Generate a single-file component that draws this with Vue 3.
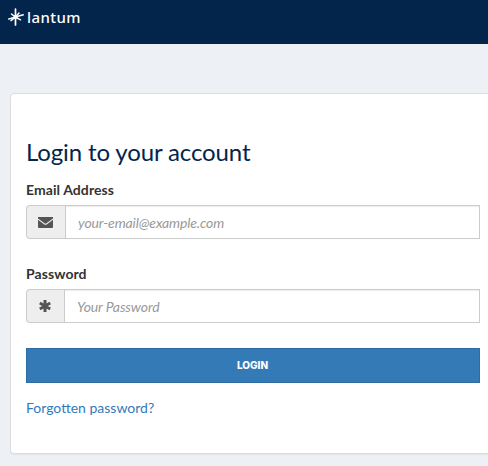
<template>
  <div class="page">
    <header class="navbar">
      <a class="brand" href="#" aria-label="lantum">
        <svg class="brand-mark" viewBox="0 0 16 18" fill="#fff" stroke="#fff" stroke-linecap="round">
          <path d="M7.500 1v16" stroke-width="1.700"/>
          <path d="M.8 11l6.700-2 7.700-2.200" stroke-width="1.500"/>
          <path d="M3.500 6l4 3 5 2.800" stroke-width="1.500"/>
          <path d="M11 5L7.500 9 3 12.600" stroke-width="1.500"/>
          <circle cx="7.500" cy="9" r="2" stroke="none"/>
        </svg>
        <span class="brand-name">lantum</span>
      </a>
    </header>

    <main class="panel">
      <h1 class="title">Login to your account</h1>
      <form @submit.prevent>
        <div v-for="field in fields" :key="field.id" class="form-group">
          <label :for="field.id">{{ field.label }}</label>
          <div class="input-group">
            <span class="addon" :class="field.id">
              <svg v-if="field.id === 'email'" class="icon-mail" viewBox="0 0 15 11" fill="currentColor">
                <path d="M0 0h15v1.500L8.500 6.300Q7.500 7 6.500 6.300L0 1.500z"/>
                <path d="M0 2.800l6 4.400q1.500 1.100 3 0l6-4.400V10q0 1-1 1H1q-1 0-1-1z"/>
              </svg>
              <svg v-else class="icon-asterisk" viewBox="0 0 12 12" fill="none" stroke="currentColor" stroke-width="3">
                <path d="M6 0v12M.8 3l10.400 6M11.200 3L.8 9"/>
              </svg>
            </span>
            <input :id="field.id" v-model="form[field.id]" :type="field.type" :placeholder="field.placeholder" />
          </div>
        </div>
        <button type="submit" class="btn-login">LOGIN</button>
      </form>
      <a class="forgot" href="#">Forgotten password?</a>
    </main>
  </div>
</template>

<script setup>
import { reactive } from 'vue'

const form = reactive({ email: '', password: '' })

const fields = [
  { id: 'email', label: 'Email Address', type: 'email', placeholder: 'your-email@example.com' },
  { id: 'password', label: 'Password', type: 'password', placeholder: 'Your Password' }
]
</script>

<style>
body {
  background: #edf1f6;
  overflow: hidden;
}
</style>

<style scoped>
* { box-sizing: border-box; }
.page {
  min-height: 466px;
  font-family: Lato, sans-serif;
  font-size: 14px;
  line-height: 20px;
  color: #333;
}
.navbar {
  height: 44px;
  padding: 8px 8px 0;
  background: #03254c;
}
.brand {
  display: flex;
  width: 90px;
  color: #fff;
  text-decoration: none;
}
.brand-mark {
  width: 16px;
  height: 18px;
}
.brand-name {
  margin-left: 3px;
  font-family: "Noto Sans", sans-serif;
  font-size: 15px;
  font-weight: 500;
  line-height: 19px;
  letter-spacing: 0.4px;
}

/* The panel runs past the right edge of the window */
.panel {
  width: 486px;
  height: 361px;
  margin: 49px 0 0 10px;
  padding: 42px 15px 0;
  background: #fff;
  border: 1px solid #ddd;
  border-radius: 4px;
  box-shadow: 0 1px 1px rgba(0, 0, 0, 0.05);
}
.title {
  margin: 0 0 12px;
  font-size: 24px;
  font-weight: 400;
  line-height: 32px;
  letter-spacing: -0.13px;
  color: #03254c;
}
.form-group {
  height: 59px;
  margin-bottom: 25px;
}
label {
  display: block;
  margin-bottom: 5px;
  font-weight: 700;
  letter-spacing: 0.08px;
}
.input-group {
  display: flex;
  height: 34px;
}
.addon {
  display: flex;
  align-items: center;
  width: 39px;
  padding-left: 11px;
  color: #555;
  background: #eee;
  border: 1px solid #ccc;
  border-right: 0;
  border-radius: 4px 0 0 4px;
}
.addon.password {
  width: 38px;
  padding-left: 12px;
}
.icon-mail {
  width: 15px;
  height: 11px;
}
.icon-asterisk {
  width: 12px;
  height: 12px;
}
input {
  flex: 1;
  min-width: 0;
  padding: 7px 12px 5px;
  font: inherit;
  letter-spacing: -0.12px;
  color: #555;
  background: #fff;
  border: 1px solid #ccc;
  border-radius: 0;
  outline: 0;
  box-shadow: inset 0 1px 1px rgba(0, 0, 0, 0.075);
}
input::placeholder {
  font-style: italic;
  color: #999;
  opacity: 1;
}
.btn-login {
  display: block;
  width: 100%;
  height: 35px;
  padding: 0 1px 2px 0;
  font-family: Inter, sans-serif;
  font-size: 10px;
  font-weight: 800;
  color: #fff;
  background: #337ab7;
  border: 1px solid #2e6da4;
  border-radius: 0;
}
.forgot {
  display: inline-block;
  margin-top: 15px;
  color: #337ab7;
  text-decoration: none;
}
</style>
